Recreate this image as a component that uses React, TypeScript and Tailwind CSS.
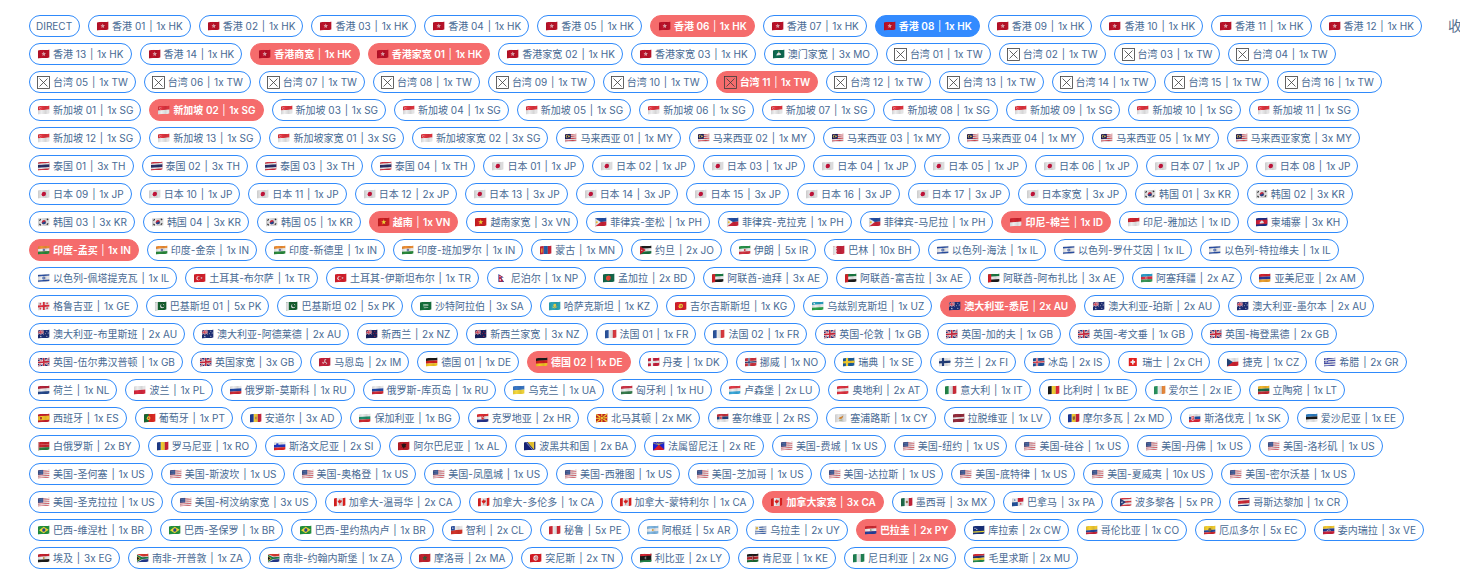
import React, { useState } from "react";

type Status = "idle" | "failed" | "current";

/* ---------- flag drawing helpers, on a 12 x 8 field ---------- */

const W = "#ededee";

const rect = (x: number, y: number, w: number, h: number, fill: string) => (
  <rect key={`r${x}-${y}-${w}-${h}`} x={x} y={y} width={w} height={h} fill={fill} />
);
const dot = (x: number, y: number, r: number, fill: string) => (
  <circle key={`c${x}-${y}-${r}`} cx={x} cy={y} r={r} fill={fill} />
);
const shape = (d: string, fill: string) => <path key={d} d={d} fill={fill} />;
const line = (d: string, stroke: string, width: number) => (
  <path key={d + stroke} d={d} stroke={stroke} strokeWidth={width} fill="none" />
);
const rows = (...c: string[]) => c.map((f, i) => rect(0, (8 / c.length) * i, 12, 8 / c.length + 0.02, f));
const cols = (...c: string[]) => c.map((f, i) => rect((12 / c.length) * i, 0, 12 / c.length + 0.02, 8, f));
const cross = (bg: string, outer: string, inner: string) => [
  rect(0, 0, 12, 8, bg),
  rect(3.1, 0, 2.2, 8, outer),
  rect(0, 2.9, 12, 2.2, outer),
  rect(3.7, 0, 1, 8, inner),
  rect(0, 3.5, 12, 1, inner),
];
const union = (w: number, h: number, bg = "#1f2f78") => [
  rect(0, 0, w, h, bg),
  line(`M0 0L${w} ${h}M${w} 0L0 ${h}`, W, h * 0.2),
  line(`M0 0L${w} ${h}M${w} 0L0 ${h} `, "#cf2239", h * 0.08),
  line(`M${w / 2} 0V${h}M0 ${h / 2}H${w}`, W, h * 0.34),
  line(`M${w / 2} 0V${h}M0 ${h / 2}H${w} `, "#cf2239", h * 0.19),
];
const star = (x: number, y: number, r: number, fill: string) => {
  const pts = Array.from({ length: 10 }, (_, i) => {
    const a = (Math.PI / 5) * i - Math.PI / 2;
    const q = i % 2 ? r * 0.42 : r;
    return `${(x + q * Math.cos(a)).toFixed(2)},${(y + q * Math.sin(a)).toFixed(2)}`;
  });
  return <polygon key={`s${x}-${y}`} points={pts.join(" ")} fill={fill} />;
};

const flags: Record<string, React.ReactNode> = {
  HK: [rect(0, 0, 12, 8, "#be1229"), star(6, 4, 2.3, "#f3d9dc"), dot(6, 4, 0.5, "#be1229")],
  MO: [rect(0, 0, 12, 8, "#0f6b52"), shape("M3.6 5.2C4 3 5.2 3.4 6 2.2C6.8 3.4 8 3 8.4 5.2Z", W), star(6, 1.3, 0.7, "#f5cd3c")],
  SG: [...rows("#e2343f", W), dot(2.6, 2.1, 1.1, "#f3b4b8"), dot(3.1, 2.1, 0.9, "#e2343f")],
  MY: [...rows("#d64a55", W, "#d64a55", W, "#d64a55", W, "#d64a55", W), rect(0, 0, 6, 4.6, "#17205e"), dot(2.5, 2.3, 1.5, "#f2c94c"), dot(3, 2.3, 1.2, "#17205e"), dot(4.2, 2.3, 0.8, "#f2c94c")],
  TH: [rect(0, 0, 12, 8, "#cf3140"), rect(0, 1.4, 12, 5.2, W), rect(0, 2.7, 12, 2.6, "#2a2e66")],
  JP: [rect(0, 0, 12, 8, "#e4e4e5"), dot(6, 4, 2.2, "#c9143c")],
  KR: [rect(0, 0, 12, 8, "#e4e4e5"), dot(6, 4, 2, "#cc2a40"), shape("M4 4A2 2 0 0 0 8 4C7 3.2 6.6 3.6 6 4S4.8 4.8 4 4Z", "#1c4a96"), line("M1.6 2.4L3 1.2M9 1.2L10.4 2.4M1.6 5.6L3 6.8M9 6.8L10.4 5.6", "#333", 1.1)],
  VN: [rect(0, 0, 12, 8, "#cf1f22"), star(6, 4.1, 2.6, "#fbe23c")],
  PH: [...rows("#2450a6", "#cc2338"), shape("M0 0L6 4L0 8Z", W), dot(2, 4, 1, "#f4c637")],
  ID: rows("#d22630", W),
  KH: [rect(0, 0, 12, 8, "#1f2f86"), rect(0, 2, 12, 4, "#d3213a"), shape("M4 5.3V4L5 3.2L6 2.4L7 3.2L8 4V5.3Z", W)],
  IN: [...rows("#ef8f35", W, "#2a8a3c"), dot(6, 4, 1.1, "#4b549c"), dot(6, 4, 0.5, W)],
  MN: [...cols("#c8253a", "#2460ae", "#c8253a"), rect(1.4, 2.2, 1.2, 4, "#f2b93b")],
  JO: [...rows("#1d1d1d", W, "#17703f"), shape("M0 0L6 4L0 8Z", "#c8202f"), dot(2, 4, 0.6, W)],
  IR: [...rows("#28934b", W, "#d33240"), dot(6, 4, 0.9, "#d33240")],
  BH: [rect(0, 0, 12, 8, "#c8243c"), shape("M0 0H3L4.4 .8L3 1.6L4.4 2.4L3 3.2L4.4 4L3 4.8L4.4 5.6L3 6.4L4.4 7.2L3 8H0Z", W)],
  IL: [rect(0, 0, 12, 8, W), rect(0, 0.8, 12, 1.3, "#2a50a6"), rect(0, 5.9, 12, 1.3, "#2a50a6"), line("M6 2.6L7.3 4.7H4.7ZM6 5.4L4.7 3.3H7.3Z", "#2a50a6", 0.45)],
  TR: [rect(0, 0, 12, 8, "#d9202c"), dot(4.6, 4, 2.1, W), dot(5.3, 4, 1.7, "#d9202c"), star(7.8, 4, 1.1, W)],
  NP: [shape("M2.6 0L8 3.6H5.4L8.4 7.8H2.6Z", "#274a9c"), shape("M3.1 .8L7 3.2H4.6L7.5 7.3H3.1Z", "#cb1f3c"), dot(4.2, 2.5, 0.6, W), dot(4.4, 5.7, 0.8, W)],
  BD: [rect(0, 0, 12, 8, "#14694c"), dot(5.6, 4, 2.5, "#ea4a3a")],
  AE: [...rows("#1a7a42", W, "#1d1d1d"), rect(0, 0, 3.4, 8, "#da2128")],
  AZ: [...rows("#2a9fcb", "#dd3044", "#3b9a58"), dot(5.8, 4, 1.1, W), dot(6.2, 4, 0.9, "#dd3044")],
  AM: rows("#d3222f", "#27369a", "#efa32f"),
  GE: [rect(0, 0, 12, 8, W), rect(5.1, 0, 1.8, 8, "#df2b3c"), rect(0, 3.1, 12, 1.8, "#df2b3c"), line("M2.6 .8V2.6M1.7 1.7H3.5M9.4 .8V2.6M8.5 1.7H10.3M2.6 5.4V7.2M1.7 6.3H3.5M9.4 5.4V7.2M8.5 6.3H10.3", "#df2b3c", 0.7)],
  PK: [rect(0, 0, 12, 8, "#15602f"), rect(0, 0, 3, 8, W), dot(7.4, 4.1, 2.1, W), dot(8, 3.6, 1.8, "#15602f"), star(8.8, 2.8, 0.8, W)],
  SA: [rect(0, 0, 12, 8, "#14703c"), line("M3.4 2.6H8.6M3.4 3.7H8.6", "#b9d6c4", 0.8), line("M4 5.5H8.4", W, 0.6)],
  KZ: [rect(0, 0, 12, 8, "#2ba7b8"), dot(6, 3.4, 1.5, "#efd54a"), line("M3.6 4.8Q6 6.8 8.4 4.8", "#efd54a", 0.8)],
  KG: [rect(0, 0, 12, 8, "#d9202c"), dot(6, 4, 2.2, "#f6dc3d"), dot(6, 4, 1.2, "#d9202c"), dot(6, 4, 0.8, "#f6dc3d")],
  UZ: [...rows("#27a0bf", W, "#2da44b"), dot(2.4, 1.4, 0.8, W)],
  AU: [rect(0, 0, 12, 8, "#1e2f78"), ...union(6, 4.2), star(3, 6.2, 1.1, W), star(9, 1.6, 0.7, W), star(7.6, 3.8, 0.7, W), star(10.4, 3.4, 0.7, W), star(9, 6.4, 0.7, W)],
  NZ: [rect(0, 0, 12, 8, "#17205c"), ...union(6, 4.2, "#17205c"), star(9, 1.6, 0.8, "#d5243c"), star(7.7, 3.8, 0.8, "#d5243c"), star(10.4, 3.6, 0.8, "#d5243c"), star(9, 6.3, 0.9, "#d5243c")],
  FR: cols("#2b55a0", W, "#dd3a40"),
  GB: union(12, 8),
  IM: [rect(0, 0, 12, 8, "#c4203a"), line("M6 4V1.8H7.4M6 4L8 5.2L7.3 6.3M6 4L4.2 5.2L4 3.8", "#ead9dc", 0.9)],
  DE: rows("#191919", "#d7201e", "#f5c823"),
  DK: cross("#c8203c", W, W),
  NO: cross("#cf3440", W, "#23356e"),
  SE: cross("#1f5f9c", "#f4cc2f", "#f4cc2f"),
  FI: cross(W, "#213d78", "#213d78"),
  IS: cross("#22529a", W, "#d62c3c"),
  CH: [rect(2, 0, 8, 8, "#e0201f"), rect(5.2, 1.7, 1.6, 4.6, W), rect(3.7, 3.2, 4.6, 1.6, W)],
  CZ: [...rows(W, "#d2222f"), shape("M0 0L6 4L0 8Z", "#22477e")],
  GR: [...rows("#4851ae", W, "#4851ae", W, "#4851ae", W, "#4851ae"), rect(0, 0, 4.4, 4.4, "#4851ae"), line("M2.2 0V4.4M0 2.2H4.4", W, 0.9)],
  NL: rows("#b5243a", W, "#264a8e"),
  PL: rows(W, "#d9293e"),
  RU: rows(W, "#2249a4", "#d02a35"),
  UA: rows("#3a78c8", "#f6d83a"),
  HU: rows("#cf3547", W, "#377d4d"),
  LU: rows("#e23b46", W, "#3aa9dc"),
  AT: rows("#e03340", W, "#e03340"),
  IT: cols("#23884a", W, "#cf2c3a"),
  BE: cols("#1a1a1a", "#f7d535", "#e3283a"),
  IE: cols("#2a9560", W, "#ec8a3c"),
  LT: rows("#f3b62d", "#1a6b48", "#c32a33"),
  ES: [rect(0, 0, 12, 8, "#c8202c"), rect(0, 2, 12, 4, "#f6c52c"), rect(2.2, 2.9, 2, 2.2, "#b5452c")],
  PT: [rect(0, 0, 12, 8, "#e22a22"), rect(0, 0, 4.8, 8, "#166b34"), dot(4.8, 4, 1.8, "#f6d83a"), dot(4.8, 4, 0.9, "#d4362f")],
  AD: [...cols("#1f3f96", "#f4cf38", "#cb2340"), rect(5.1, 2.8, 1.8, 2.4, "#bd8550")],
  BG: rows(W, "#1f8f6c", "#d22a31"),
  HR: [...rows("#e02d33", W, "#26348c"), rect(4.7, 1.8, 2.6, 3.4, "#dd2f37"), rect(5.4, 2.6, 0.8, 0.8, W), rect(6.2, 3.4, 0.8, 0.8, W)],
  MK: [rect(0, 0, 12, 8, "#cf2323"), line("M0 0L12 8M12 0L0 8M6 0V8M0 4H12", "#f6d534", 1.2), dot(6, 4, 1.8, "#cf2323"), dot(6, 4, 1.3, "#f6d534")],
  RS: [...rows("#c8323e", "#24467f", W), rect(2.8, 1.8, 2.6, 3.8, "#eccdd0"), rect(3.4, 2.4, 1.4, 2.4, "#c8323e")],
  CY: [rect(0, 0, 12, 8, "#e4e4e5"), shape("M3.6 4.4C4.6 2.6 6.4 3.4 8.6 1.8C8 3.4 7.6 5 5.6 5Z", "#dc8c32"), line("M4.4 6H7.6", "#7b8c4a", 0.6)],
  LV: [rect(0, 0, 12, 8, "#962c3c"), rect(0, 3.2, 12, 1.6, W)],
  MD: [...cols("#1e3a9c", "#f6d032", "#c8203c"), shape("M4.9 2.4H7.1V5L6 6.2L4.9 5Z", "#9a5f34")],
  SK: [...rows(W, "#2251a6", "#e0293a"), shape("M2.2 1.8H5.8V4.6Q5.6 6 4 6.6Q2.4 6 2.2 4.6Z", W), shape("M2.7 2.2H5.3V4.6Q5 5.6 4 6Q3 5.6 2.7 4.6Z", "#de2c3b"), line("M4 2.6V5.4M3.2 3.6H4.8", W, 0.5)],
  EE: rows("#2d7fc4", "#1b1b1b", W),
  BY: [...rows("#c8262c", "#c8262c", "#2c7d3c"), rect(0, 0, 1.4, 8, "#e3a8a8")],
  RO: cols("#1f3c8c", "#f6d032", "#cb2237"),
  SI: [...rows(W, "#2036c0", "#e22626"), rect(2.4, 1.4, 2.2, 2.8, "#2036c0")],
  AL: [rect(0, 0, 12, 8, "#bd1f28"), shape("M6 1.6L8.6 2.4L7.6 4L8.4 5.2L6.8 5.2L6 6.8L5.2 5.2L3.6 5.2L4.4 4L3.4 2.4Z", "#2a1416")],
  BA: [rect(0, 0, 12, 8, "#16247c"), shape("M3.6 0H10.4V8Z", "#f2cc32"), line("M2.6 .4L9 8", "#cfd3e8", 0.6)],
  RE: [rect(0, 0, 12, 8, "#1d22d8"), shape("M0 8L6 2.8L12 8Z", "#e01c2c"), line("M6 2.8L0 .8M6 2.8L3 0M6 2.8V0M6 2.8L9 0M6 2.8L12 .8", "#f2dc3c", 0.5)],
  US: [...rows("#d4525e", W, "#d4525e", W, "#d4525e", W, "#d4525e", W, "#d4525e"), rect(0, 0, 5.4, 4.4, "#35508c"), line("M.8 1.2H5M.8 3H5", "#8f9fc2", 0.4)],
  CA: [rect(0, 0, 12, 8, W), rect(0, 0, 3, 8, "#e0201f"), rect(9, 0, 3, 8, "#e0201f"), shape("M6 1.2L6.8 2.6L8.2 2.6L7.8 4.2L6.3 5.2V6.6H5.7V5.2L4.2 4.2L3.8 2.6L5.2 2.6Z", "#e0201f")],
  MX: [...cols("#1d6b4a", W, "#c6243a"), dot(6, 4, 1.1, "#8c7a4c")],
  PA: [rect(0, 0, 12, 8, W), rect(6, 0, 6, 4, "#d3213a"), rect(0, 4, 6, 4, "#22529a"), star(3, 2, 1.1, "#22529a"), star(9, 6, 1.1, "#d3213a")],
  PR: [...rows("#d63a45", W, "#d63a45", W, "#d63a45"), shape("M0 0L6 4L0 8Z", "#28407c"), star(2.1, 4, 1.2, W)],
  CR: [rect(0, 0, 12, 8, "#24397e"), rect(0, 1.3, 12, 5.4, W), rect(0, 2.6, 12, 2.8, "#d02936")],
  BR: [rect(0, 0, 12, 8, "#22933f"), shape("M6 .9L10.8 4L6 7.1L1.2 4Z", "#f5dd38"), dot(6, 4, 1.6, "#2a4c94")],
  CL: [...rows(W, "#d43328"), rect(0, 0, 4, 4, "#1f459c"), star(2, 2, 1.1, W)],
  PE: cols("#d22735", W, "#d22735"),
  AR: [...rows("#80b8e4", W, "#80b8e4"), dot(6, 4, 0.9, "#e3a53c")],
  UY: [...rows(W, "#4168b0", W, "#4168b0", W, "#4168b0", W, "#4168b0"), rect(0, 0, 4.4, 4, W), dot(2.2, 2, 1.2, "#e2b53a")],
  PY: [...rows("#cf2b33", W, "#23409c"), dot(6, 4, 0.8, "#7c8a5a")],
  CW: [rect(0, 0, 12, 8, "#17307c"), rect(0, 5, 12, 1.2, "#f2e03c"), star(2.2, 2.2, 0.9, W), star(4, 3.2, 0.9, W)],
  CO: [rect(0, 0, 12, 4, "#f5cd32"), rect(0, 4, 12, 2, "#24479a"), rect(0, 6, 12, 2, "#c9243a")],
  EC: [rect(0, 0, 12, 4, "#f5cf2e"), rect(0, 4, 12, 2, "#24479a"), rect(0, 6, 12, 2, "#d1292f"), dot(6, 3.8, 1.6, "#7f7444")],
  VE: [...rows("#f3c831", "#1f3790", "#c9203a"), line("M4 4.6Q6 3 8 4.6", W, 0.6)],
  EG: [...rows("#c8222f", W, "#1c1c1c"), dot(6, 4, 0.9, "#c39a3c")],
  ZA: [...rows("#db3932", "#243a90"), shape("M0 0L6 2.6H12V5.4H6L0 8Z", W), shape("M0 .6L5.6 3.2H12V4.8H5.6L0 7.4Z", "#1a7d4c"), shape("M0 1.6L3.8 4L0 6.4Z", "#f2b63a"), shape("M0 2.3L2.8 4L0 5.7Z", "#1c1c1c")],
  MA: [rect(0, 0, 12, 8, "#c4232f"), line("M6 2L7.2 5.8L4 3.5H8L4.8 5.8Z", "#1c6a3c", 0.6)],
  TN: [rect(0, 0, 12, 8, "#da1a24"), dot(6, 4, 2.5, W), dot(6.2, 4, 1.5, "#da1a24"), dot(6.6, 4, 1.2, W), star(6.6, 4, 0.9, "#da1a24")],
  LY: [rect(0, 0, 12, 8, "#1a1a1a"), rect(0, 0, 12, 2, "#d82434"), rect(0, 6, 12, 2, "#21894c"), dot(6, 4, 1.1, W), dot(6.4, 4, 0.9, "#1a1a1a")],
  KE: [rect(0, 0, 12, 8, W), rect(0, 0, 12, 2.3, "#1c1c1c"), rect(0, 2.8, 12, 2.4, "#b8242c"), rect(0, 5.7, 12, 2.3, "#1a6a34"), shape("M6 1.2Q8.4 4 6 6.8Q3.6 4 6 1.2Z", "#8f1c22"), rect(5.8, 2, 0.4, 4, W)],
  NG: cols("#1f8354", W, "#1f8354"),
  MU: rows("#d62a35", "#26326e", "#f2cf35", "#22894c"),
};

function Flag({ code }: { code: string }) {
  if (code === "TW") {
    return (
      <svg className="h-[13px] w-3.5 shrink-0" viewBox="0 0 14 13" fill="none" stroke="#3c3c3c" aria-hidden="true">
        <rect x="1.5" y="0.5" width="12" height="12" strokeWidth="0.8" />
        <path d="M3.5 2.5L11.5 10.5M11.5 2.5L3.5 10.5" strokeWidth="0.8" />
      </svg>
    );
  }
  const shaded = code !== "NP" && code !== "CH";
  return (
    <svg className="h-3 w-3.5 shrink-0" viewBox="0 0 14 12" aria-hidden="true">
      <g transform="translate(1.8 2.2) skewY(-4) scale(1 1.06)">
        <g clipPath="url(#flag-wave)">
          {flags[code]}
          {shaded && <rect width="12" height="8" fill="url(#flag-shade)" />}
        </g>
      </g>
    </svg>
  );
}

/* name|rate|country, with "!" for a failed node and "*" for the current one */
const nodes = `香港 01|1|HK 香港 02|1|HK 香港 03|1|HK 香港 04|1|HK 香港 05|1|HK !香港 06|1|HK 香港 07|1|HK *香港 08|1|HK 香港 09|1|HK 香港 10|1|HK 香港 11|1|HK 香港 12|1|HK
香港 13|1|HK 香港 14|1|HK !香港商宽|1|HK !香港家宽 01|1|HK 香港家宽 02|1|HK 香港家宽 03|1|HK 澳门家宽|3|MO 台湾 01|1|TW 台湾 02|1|TW 台湾 03|1|TW 台湾 04|1|TW
台湾 05|1|TW 台湾 06|1|TW 台湾 07|1|TW 台湾 08|1|TW 台湾 09|1|TW 台湾 10|1|TW !台湾 11|1|TW 台湾 12|1|TW 台湾 13|1|TW 台湾 14|1|TW 台湾 15|1|TW 台湾 16|1|TW
新加坡 01|1|SG !新加坡 02|1|SG 新加坡 03|1|SG 新加坡 04|1|SG 新加坡 05|1|SG 新加坡 06|1|SG 新加坡 07|1|SG 新加坡 08|1|SG 新加坡 09|1|SG 新加坡 10|1|SG 新加坡 11|1|SG
新加坡 12|1|SG 新加坡 13|1|SG 新加坡家宽 01|3|SG 新加坡家宽 02|3|SG 马来西亚 01|1|MY 马来西亚 02|1|MY 马来西亚 03|1|MY 马来西亚 04|1|MY 马来西亚 05|1|MY 马来西亚家宽|3|MY
泰国 01|3|TH 泰国 02|3|TH 泰国 03|3|TH 泰国 04|1|TH 日本 01|1|JP 日本 02|1|JP 日本 03|1|JP 日本 04|1|JP 日本 05|1|JP 日本 06|1|JP 日本 07|1|JP 日本 08|1|JP
日本 09|1|JP 日本 10|1|JP 日本 11|1|JP 日本 12|2|JP 日本 13|3|JP 日本 14|3|JP 日本 15|3|JP 日本 16|3|JP 日本 17|3|JP 日本家宽|3|JP 韩国 01|3|KR 韩国 02|3|KR
韩国 03|3|KR 韩国 04|3|KR 韩国 05|1|KR !越南|1|VN 越南家宽|3|VN 菲律宾-奎松|1|PH 菲律宾-克拉克|1|PH 菲律宾-马尼拉|1|PH !印尼-棉兰|1|ID 印尼-雅加达|1|ID 柬埔寨|3|KH
!印度-孟买|1|IN 印度-金奈|1|IN 印度-新德里|1|IN 印度-班加罗尔|1|IN 蒙古|1|MN 约旦|2|JO 伊朗|5|IR 巴林|10|BH 以色列-海法|1|IL 以色列-罗什艾因|1|IL 以色列-特拉维夫|1|IL
以色列-佩塔提克瓦|1|IL 土耳其-布尔萨|1|TR 土耳其-伊斯坦布尔|1|TR 尼泊尔|1|NP 孟加拉|2|BD 阿联酋-迪拜|3|AE 阿联酋-富吉拉|3|AE 阿联酋-阿布扎比|3|AE 阿塞拜疆|2|AZ 亚美尼亚|2|AM
格鲁吉亚|1|GE 巴基斯坦 01|5|PK 巴基斯坦 02|5|PK 沙特阿拉伯|3|SA 哈萨克斯坦|1|KZ 吉尔吉斯斯坦|1|KG 乌兹别克斯坦|1|UZ !澳大利亚-悉尼|2|AU 澳大利亚-珀斯|2|AU 澳大利亚-墨尔本|2|AU
澳大利亚-布里斯班|2|AU 澳大利亚-阿德莱德|2|AU 新西兰|2|NZ 新西兰家宽|3|NZ 法国 01|1|FR 法国 02|1|FR 英国-伦敦|1|GB 英国-加的夫|1|GB 英国-考文垂|1|GB 英国-梅登黑德|2|GB
英国-伍尔弗汉普顿|1|GB 英国家宽|3|GB 马恩岛|2|IM 德国 01|1|DE !德国 02|1|DE 丹麦|1|DK 挪威|1|NO 瑞典|1|SE 芬兰|2|FI 冰岛|2|IS 瑞士|2|CH 捷克|1|CZ 希腊|2|GR
荷兰|1|NL 波兰|1|PL 俄罗斯-莫斯科|1|RU 俄罗斯-库页岛|1|RU 乌克兰|1|UA 匈牙利|1|HU 卢森堡|2|LU 奥地利|2|AT 意大利|1|IT 比利时|1|BE 爱尔兰|2|IE 立陶宛|1|LT
西班牙|1|ES 葡萄牙|1|PT 安道尔|3|AD 保加利亚|1|BG 克罗地亚|2|HR 北马其顿|2|MK 塞尔维亚|2|RS 塞浦路斯|1|CY 拉脱维亚|1|LV 摩尔多瓦|2|MD 斯洛伐克|1|SK 爱沙尼亚|1|EE
白俄罗斯|2|BY 罗马尼亚|1|RO 斯洛文尼亚|2|SI 阿尔巴尼亚|1|AL 波黑共和国|2|BA 法属留尼汪|2|RE 美国-费城|1|US 美国-纽约|1|US 美国-硅谷|1|US 美国-丹佛|1|US 美国-洛杉矶|1|US
美国-圣何塞|1|US 美国-斯波坎|1|US 美国-奥格登|1|US 美国-凤凰城|1|US 美国-西雅图|1|US 美国-芝加哥|1|US 美国-达拉斯|1|US 美国-底特律|1|US 美国-夏威夷|10|US 美国-密尔沃基|1|US
美国-圣克拉拉|1|US 美国-柯汶纳家宽|3|US 加拿大-温哥华|2|CA 加拿大-多伦多|1|CA 加拿大-蒙特利尔|1|CA !加拿大家宽|3|CA 墨西哥|3|MX 巴拿马|3|PA 波多黎各|5|PR 哥斯达黎加|1|CR
巴西-维涅杜|1|BR 巴西-圣保罗|1|BR 巴西-里约热内卢|1|BR 智利|2|CL 秘鲁|5|PE 阿根廷|5|AR 乌拉圭|2|UY !巴拉圭|2|PY 库拉索|2|CW 哥伦比亚|1|CO 厄瓜多尔|5|EC 委内瑞拉|3|VE
埃及|3|EG 南非-开普敦|1|ZA 南非-约翰内斯堡|1|ZA 摩洛哥|2|MA 突尼斯|2|TN 利比亚|2|LY 肯尼亚|1|KE 尼日利亚|2|NG 毛里求斯|2|MU`
  .match(/[!*]?[^\s|]+(?: \d\d)?\|\d+\|[A-Z]{2}/g)!
  .map((entry) => {
    const status: Status = entry[0] === "!" ? "failed" : entry[0] === "*" ? "current" : "idle";
    const [name, rate, code] = entry.replace(/^[!*]/, "").split("|");
    return { name, rate: `${rate}x ${code}`, code, status };
  });

const tones: Record<Status, string> = {
  idle: "border-[#2f8afb] bg-white text-[#486a94]",
  failed: "border-[#f56c6c] bg-[#f56c6c] font-semibold text-white",
  current: "border-[#338bff] bg-[#338bff] font-semibold text-white",
};

interface PillProps {
  name: string;
  rate?: string;
  code?: string;
  status: Status;
  onSelect: () => void;
}

function Pill({ name, rate, code, status, onSelect }: PillProps) {
  return (
    <button
      type="button"
      aria-pressed={status === "current"}
      onClick={onSelect}
      className={`flex h-[22px] cursor-pointer items-center gap-[3px] whitespace-nowrap rounded-full border pr-[7px] pl-1.5 text-[10px] leading-5 ${tones[status]}`}
    >
      {code && <Flag code={code} />}
      <span>
        {name}
        {rate && (
          <>
            {" "}
            <span className="mx-px font-normal">|</span> {rate}
          </>
        )}
      </span>
    </button>
  );
}

export default function App() {
  const [current, setCurrent] = useState("香港 08");
  const statusOf = (name: string, status: Status): Status =>
    name === current ? "current" : status === "current" ? "idle" : status;

  return (
    <main className="flex min-h-screen items-start overflow-hidden bg-white pt-[15px] pl-[29px] font-['Inter','Noto_Sans_CJK_SC',sans-serif]">
      <svg className="absolute size-0" aria-hidden="true">
        <clipPath id="flag-wave">
          <path d="M0 .3C2-.2 4-.2 6 .2S10 .5 11.7 .1V7.7C10 8.1 8 8.1 6 7.8S2 7.5 0 7.9Z" />
        </clipPath>
        <linearGradient id="flag-shade">
          <stop offset="0" stopColor="#000" stopOpacity="0.12" />
          <stop offset="0.3" stopColor="#000" stopOpacity="0" />
          <stop offset="0.65" stopColor="#000" stopOpacity="0.1" />
          <stop offset="0.85" stopColor="#000" stopOpacity="0.02" />
          <stop offset="1" stopColor="#000" stopOpacity="0.1" />
        </linearGradient>
      </svg>
      <div className="flex min-w-0 flex-1 flex-wrap gap-x-2 gap-y-1.5">
        <Pill name="DIRECT" status={statusOf("DIRECT", "idle")} onSelect={() => setCurrent("DIRECT")} />
        {nodes.map((n) => (
          <Pill
            key={n.name}
            name={n.name}
            rate={n.rate}
            code={n.code}
            status={statusOf(n.name, n.status)}
            onSelect={() => setCurrent(n.name)}
          />
        ))}
      </div>
      <div className="w-8 shrink-0 overflow-hidden pl-5">
        <button type="button" className="block cursor-pointer whitespace-nowrap text-sm leading-[22px] text-[#56718f]">
          收
        </button>
      </div>
    </main>
  );
}
